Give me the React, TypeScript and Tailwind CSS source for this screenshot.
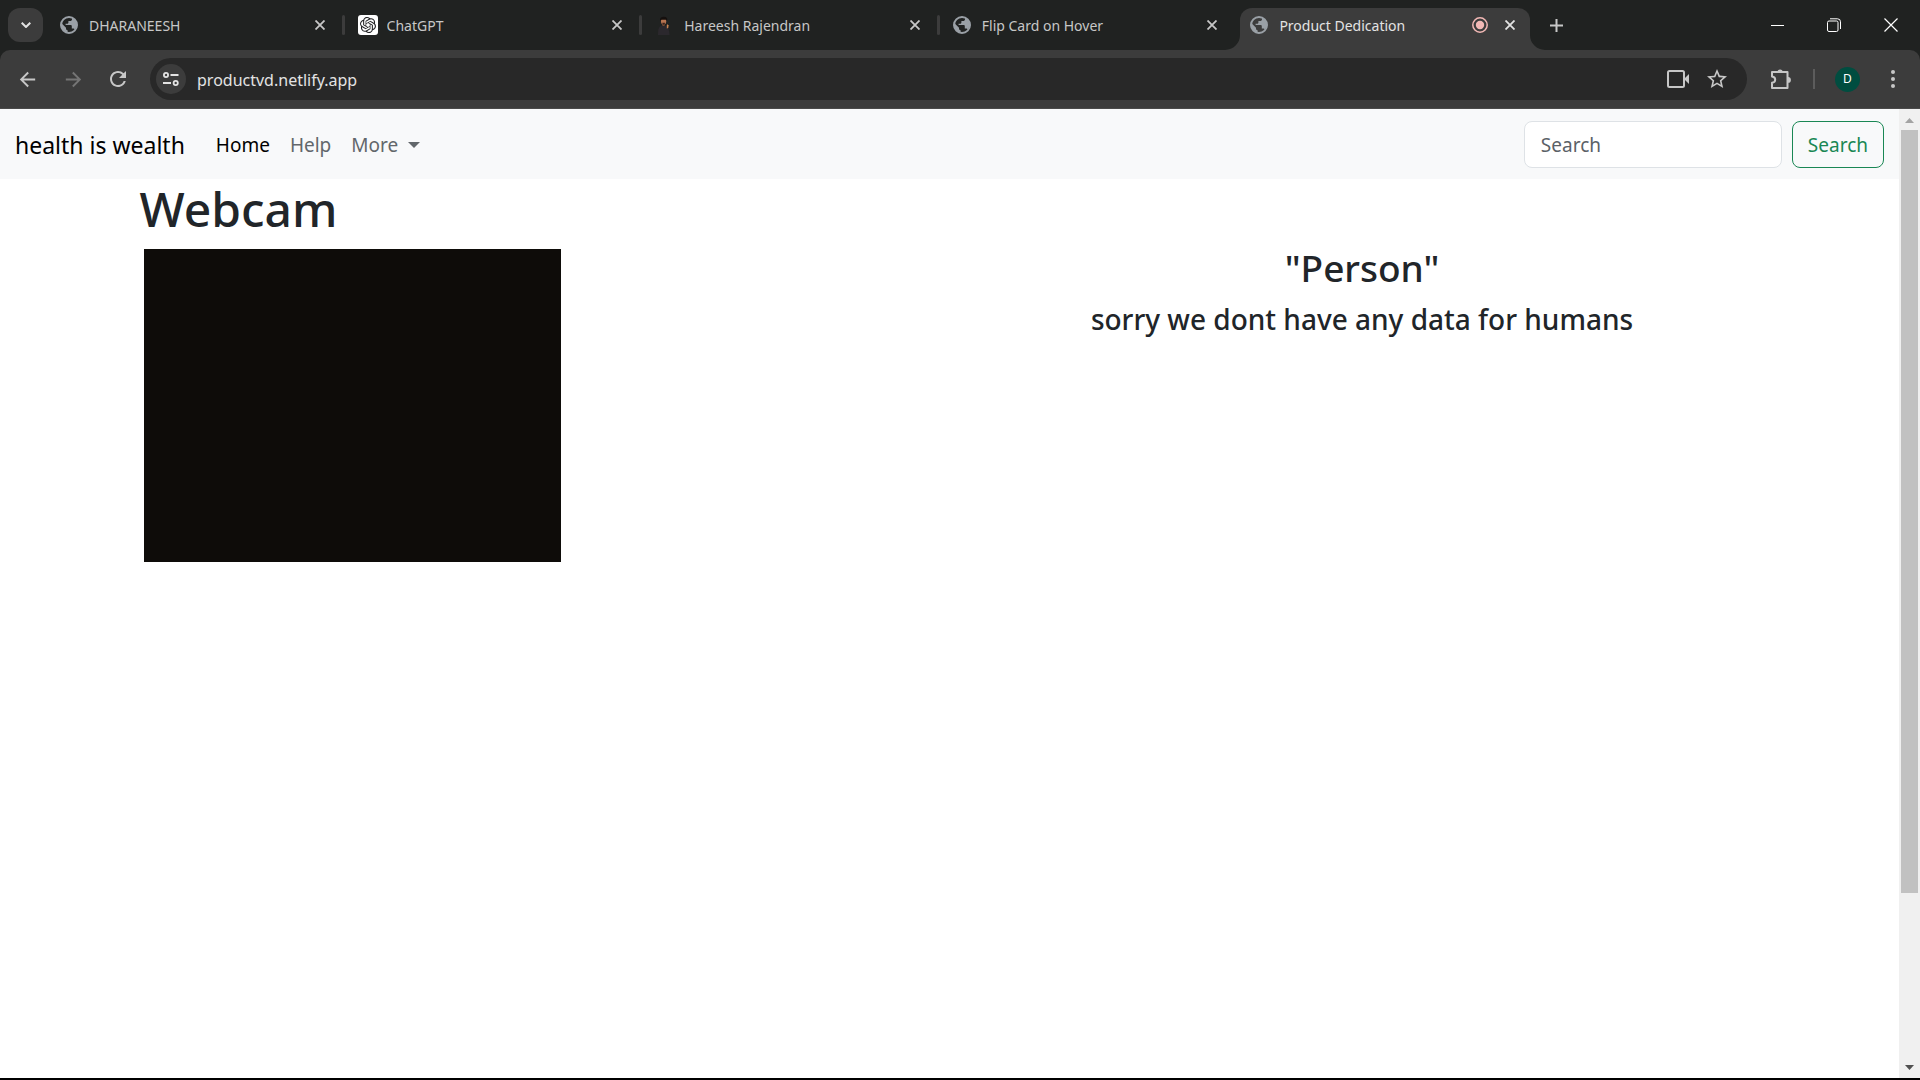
import React from "react";
import {
  MdArrowBack,
  MdArrowForward,
  MdRefresh,
  MdStarOutline,
} from "react-icons/md";
import { SiOpenai } from "react-icons/si";

function Globe() {
  return (
    <svg viewBox="0 0 18 18" className="h-[18px] w-[18px] shrink-0" aria-hidden="true">
      <circle cx="9" cy="9" r="8" fill="none" stroke="#9aa0a6" strokeWidth="2" />
      <path
        fill="#9aa0a6"
        d="M9 1c1 0 2 .2 3 .6v1.6c0 1-.8 1.8-1.800 1.800H8.400v1.500c0 .8-.6 1.300-1.400 1.300H5.600V9h5c.7 0 1.200.5 1.200 1.200v2.200h1.200c.8 0 1.500.5 1.700 1.200A8 8 0 0 0 17 9c0-4.400-3.600-8-8-8z"
      />
      <path fill="#9aa0a6" d="M1.300 7l4.700 4.700v.9c0 .9.700 1.600 1.600 1.600v2.700A8 8 0 0 1 1.300 7z" />
    </svg>
  );
}

function GptIcon() {
  return (
    <span className="flex h-5 w-5 shrink-0 items-center justify-center rounded-[3px] bg-white">
      <SiOpenai className="h-4 w-4 text-[#202123]" aria-hidden="true" />
    </span>
  );
}

function PersonIcon() {
  return (
    <svg viewBox="0 0 20 20" className="h-5 w-5 shrink-0" aria-hidden="true">
      <path fill="#2b282d" d="M3 20c0-5 .6-8.500 3.400-9.300L9 10.400l3 .8 1.800 3 .8 5.800z" />
      <rect x="7.400" y="8" width="2.200" height="2.600" fill="#a5633f" />
      <ellipse cx="8.600" cy="6.200" rx="2.600" ry="3.300" fill="#b87450" />
      <path fill="#15100e" d="M5 5.800C4.600 3 6.200 1.800 8.800 1.800s4 1.600 3.300 4L11 4.800H6.400z" />
      <path fill="#3a211a" d="M7.200 7.800h2.900l-.6 1.900H7.800z" />
      <path fill="#c9824f" d="M11.800 10l.8-.8 1 1.300-.4 2.600-1.400.3z" />
    </svg>
  );
}

function Cross() {
  return (
    <svg viewBox="0 0 10 10" className="h-[10px] w-[10px]" fill="none" stroke="currentColor" strokeWidth="1.8" aria-hidden="true">
      <path d="M.5.5l9 9M9.500.5l-9 9" />
    </svg>
  );
}

function Flare({ side }: { side: "left" | "right" }) {
  return (
    <svg
      viewBox="0 0 15 15"
      aria-hidden="true"
      className={
        side === "left"
          ? "absolute -left-[15px] bottom-0 h-[15px] w-[15px]"
          : "absolute -right-[15px] bottom-0 h-[15px] w-[15px]"
      }
    >
      <path fill="#3c3c3c" d={side === "left" ? "M15 0v15H0A15 15 0 0 0 15 0z" : "M0 0v15h15A15 15 0 0 1 0 0z"} />
    </svg>
  );
}

const tabs = [
  { title: "DHARANEESH", icon: <Globe /> },
  { title: "ChatGPT", icon: <GptIcon /> },
  { title: "Hareesh Rajendran", icon: <PersonIcon /> },
  { title: "Flip Card on Hover", icon: <Globe /> },
  { title: "Product Dedication", icon: <Globe />, active: true },
];

function TabStrip() {
  return (
    <div className="flex h-[50px] items-end bg-[#202221] text-[#c7c7c7]">
      <button aria-label="Search tabs" className="mb-2 ml-2 mr-[7px] flex h-[34px] w-[35px] shrink-0 items-center justify-center rounded-xl bg-[#3c3c3c] text-[#e3e3e3]">
        <svg viewBox="0 0 10 6" className="h-[6px] w-[10px]" fill="none" stroke="currentColor" strokeWidth="2" aria-hidden="true">
          <path d="M.7.7L5 5 9.300.7" />
        </svg>
      </button>
      <div className="flex max-w-[1480px] flex-1">
        {tabs.map((t, i) => (
          <React.Fragment key={t.title}>
            {i > 0 && (
              <span className="flex h-[42px] w-2 shrink-0 items-center justify-center pb-2 pr-[1px]">
                {!t.active && <span className="h-5 w-[3px] rounded-full bg-[#3c3c3c]" />}
              </span>
            )}
            <div
              className={
                t.active
                  ? "relative flex h-[42px] min-w-0 flex-1 items-center rounded-t-xl bg-[#3c3c3c] pb-2 pl-[10px] pr-[15px] text-[#e3e3e3]"
                  : "relative flex h-[42px] min-w-0 flex-1 items-center pb-2 pl-[10px] pr-[15px]"
              }
            >
              {t.active && <Flare side="left" />}
              <span className="flex w-[29px] shrink-0">{t.icon}</span>
              <span className="min-w-0 flex-1 truncate pt-[2px] text-[14px] leading-5">{t.title}</span>
              {t.active && (
                <svg viewBox="0 0 16 16" className="mr-[17px] h-4 w-4" aria-label="Recording">
                  <circle cx="8" cy="8" r="7.200" fill="none" stroke="#f2b8b5" strokeWidth="1.500" />
                  <circle cx="8" cy="8" r="4.200" fill="#f2b8b5" />
                </svg>
              )}
              <button aria-label={"Close " + t.title}>
                <Cross />
              </button>
              {t.active && <Flare side="right" />}
            </div>
          </React.Fragment>
        ))}
      </div>
      <button aria-label="New tab" className="mb-[18px] ml-5">
        <svg viewBox="0 0 13 13" className="h-[13px] w-[13px]" stroke="currentColor" strokeWidth="2" aria-hidden="true">
          <path d="M6.500 0v13M0 6.500h13" />
        </svg>
      </button>
      <div className="mb-[11px] ml-auto flex pr-[1px] text-white">
        <button aria-label="Minimize" className="flex h-7 w-14 items-center justify-center">
          <span className="h-px w-[13px] bg-white" />
        </button>
        <button aria-label="Restore" className="flex h-7 w-[57px] items-center justify-center">
          <svg viewBox="0 0 14 14" className="h-[14px] w-[14px]" fill="none" stroke="currentColor" aria-hidden="true">
            <rect x=".5" y="3" width="10.500" height="10.500" rx="1.500" />
            <path d="M3 .8h7.500a3 3 0 0 1 3 3V11" />
          </svg>
        </button>
        <button aria-label="Close window" className="flex h-7 w-[57px] items-center justify-center">
          <svg viewBox="0 0 14 14" className="h-[14px] w-[14px]" stroke="currentColor" strokeWidth="1.200" aria-hidden="true">
            <path d="M.5.5l13 13M13.500.5l-13 13" />
          </svg>
        </button>
      </div>
    </div>
  );
}

function Toolbar() {
  return (
    <div className="bg-[#202221]">
      <div className="flex h-[59px] items-center rounded-t-[10px] border-b border-[#4a4a4a] bg-[#3c3c3c] pl-4 pr-[17px] text-[#c7c7c7]">
        <button aria-label="Back" className="mr-[23px]">
          <MdArrowBack className="h-[23px] w-[23px]" />
        </button>
        <button aria-label="Forward" className="mr-[21px] text-[#757575]">
          <MdArrowForward className="h-[23px] w-[23px]" />
        </button>
        <button aria-label="Reload" className="mr-5">
          <MdRefresh className="h-6 w-6" />
        </button>
        <div className="flex h-[42px] min-w-0 flex-1 items-center rounded-full bg-[#282828] pl-[6px] pr-[18px]">
          <button aria-label="Site information" className="mr-[11px] flex h-[30px] w-[30px] shrink-0 items-center justify-center rounded-full bg-[#3c3c3c] text-[#e3e3e3]">
            <svg viewBox="0 0 16 14" className="h-[14px] w-4" fill="none" stroke="currentColor" strokeWidth="1.800" aria-hidden="true">
              <circle cx="3" cy="3" r="2.100" />
              <path d="M7.500 3h8M0 11h8" />
              <circle cx="12.700" cy="11" r="2.100" />
            </svg>
          </button>
          <input
            aria-label="Address"
            defaultValue="productvd.netlify.app"
            className="h-8 min-w-0 flex-1 bg-transparent pt-[2px] text-[16px] text-[#e3e3e3] outline-none"
          />
          <button aria-label="Camera in use" className="mr-4">
            <svg viewBox="0 0 22 18" className="h-[18px] w-[22px]" aria-hidden="true">
              <rect x="1" y="1" width="16" height="16" rx="1.500" fill="none" stroke="currentColor" strokeWidth="2" />
              <path fill="currentColor" d="M17 9l5-5v10z" />
            </svg>
          </button>
          <button aria-label="Bookmark this page">
            <MdStarOutline className="h-6 w-6" />
          </button>
        </div>
        <button aria-label="Extensions" className="ml-[23px] mr-[21px]">
          <svg viewBox="0 0 22 22" className="h-[22px] w-[22px]" aria-hidden="true">
            <path
              fill="none"
              stroke="currentColor"
              strokeWidth="2"
              strokeLinejoin="round"
              d="M3 4h14.500v16H2v-5.200c1.800-.3 3.200-1.400 3.200-3.100S3.800 8.900 2 8.600V4z"
            />
            <path fill="currentColor" d="M7.500 4a2.600 2.600 0 0 1 5.200 0zM18 9a2.900 2.900 0 0 1 0 5.800z" />
          </svg>
        </button>
        <span className="mr-5 h-5 w-[2px] bg-[#5c5c5c]" />
        <button aria-label="Profile" className="mr-[23px] flex h-[25px] w-[25px] items-center justify-center rounded-full bg-[#004d40] text-[12px] text-white">
          D
        </button>
        <button aria-label="Browser menu" className="flex w-5 justify-center">
          <svg viewBox="0 0 4 18" className="h-[18px] w-1" fill="currentColor" aria-hidden="true">
            <circle cx="2" cy="2" r="2" />
            <circle cx="2" cy="9" r="2" />
            <circle cx="2" cy="16" r="2" />
          </svg>
        </button>
      </div>
    </div>
  );
}

function Navbar() {
  return (
    <nav className="flex h-[70px] items-center bg-[#f8f9fa] pl-[15px] pr-[15px] text-[19px]">
      <a href="#" className="mr-[31px] pt-[2px] text-[23px] text-black">
        health is wealth
      </a>
      <a href="#" className="mr-5 pt-[2px] text-black">
        Home
      </a>
      <a href="#" className="mr-5 pt-[2px] text-[#62676b]">
        Help
      </a>
      <button className="flex items-center pt-[2px] text-[#62676b]">
        More
        <svg viewBox="0 0 12 6" className="ml-[10px] h-[6px] w-3" fill="currentColor" aria-hidden="true">
          <path d="M0 0h12L6 6z" />
        </svg>
      </button>
      <form className="ml-auto flex gap-[10px]" onSubmit={(e) => e.preventDefault()}>
        <input
          type="search"
          placeholder="Search"
          aria-label="Search"
          className="h-[47px] w-[258px] rounded-lg border border-[#dee2e6] bg-white px-4 pt-[2px] text-[#212529] placeholder:text-[#5b6167]"
        />
        <button type="submit" className="h-[47px] rounded-lg border border-[#198754] px-[15px] pt-[2px] text-[#198754]">
          Search
        </button>
      </form>
    </nav>
  );
}

function ScrollBar() {
  return (
    <div className="flex w-[21px] shrink-0 flex-col items-center bg-[#f0f0f0]" aria-hidden="true">
      <div className="flex h-[21px] items-center pt-[2px]">
        <svg viewBox="0 0 9 5" className="h-[5px] w-[9px]" fill="#a3a3a3">
          <path d="M4.500 0L9 5H0z" />
        </svg>
      </div>
      <div className="flex w-[17px] flex-1 flex-col">
        <div className="h-[82.3%] bg-[#c1c1c1]" />
      </div>
      <div className="flex h-[21px] items-center">
        <svg viewBox="0 0 9 5" className="h-[5px] w-[9px]" fill="#505050">
          <path d="M4.500 5L9 0H0z" />
        </svg>
      </div>
    </div>
  );
}

export default function App() {
  return (
    <div className="flex h-screen flex-col border-b-2 border-black bg-white font-['Noto_Sans','Open_Sans',sans-serif]">
      <TabStrip />
      <Toolbar />
      <div className="flex min-h-0 flex-1">
        <div className="min-w-0 flex-1">
          <Navbar />
          <main className="mx-auto max-w-[1650px] text-[#212529]">
            <h1 className="px-[15px] pb-[10px] text-[48px] font-medium leading-[60px]">Webcam</h1>
            <div className="grid grid-cols-2">
              <div className="px-[19px]">
                <div role="img" aria-label="Webcam feed" className="aspect-[4/3] w-[417px] max-w-full bg-[#0e0c09]" />
              </div>
              <div className="text-center">
                <h2 className="mb-3 text-[37px] font-medium leading-[38px]">"Person"</h2>
                <h4 className="text-[28px] font-medium leading-[40px]">sorry we dont have any data for humans</h4>
              </div>
            </div>
          </main>
        </div>
        <ScrollBar />
      </div>
    </div>
  );
}
